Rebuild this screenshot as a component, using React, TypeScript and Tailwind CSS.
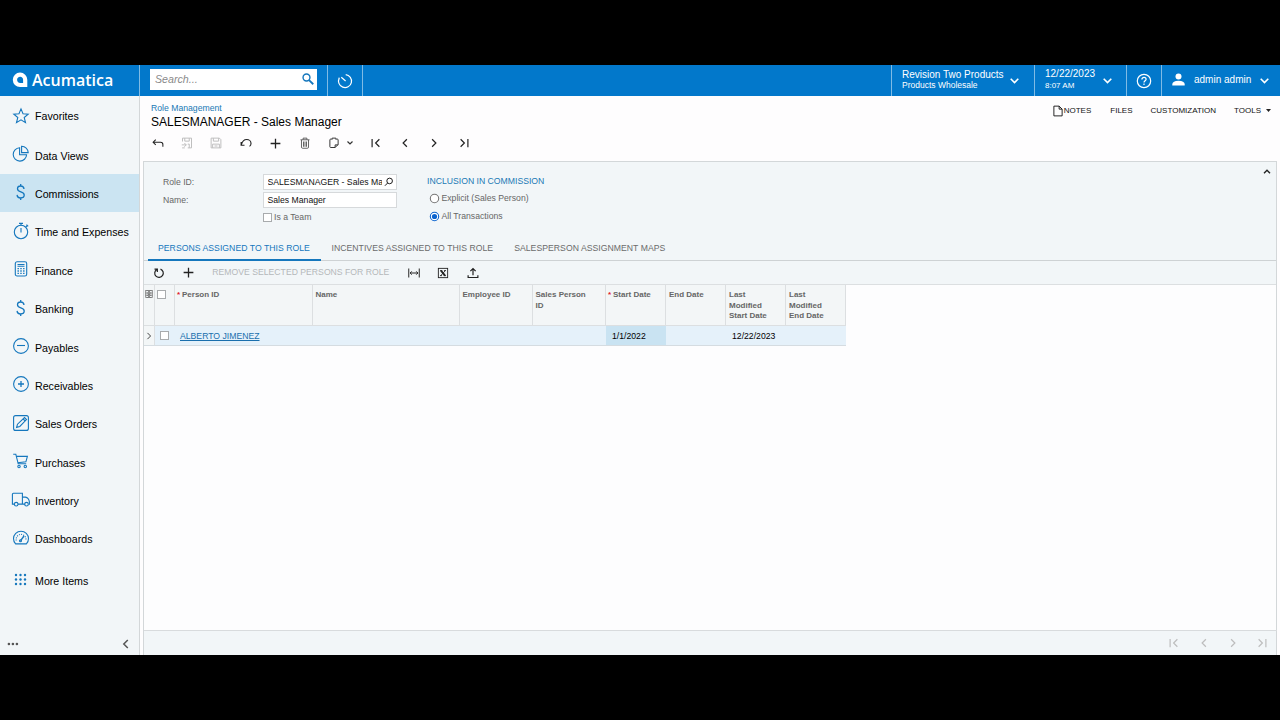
import type { ReactNode } from "react";

type IconProps = {
  children: ReactNode;
  size?: number;
  width?: number;
  className?: string;
};

// all icons are drawn on a 16 unit grid
function Icon({ children, size = 16, width = 1.1, className = "" }: IconProps) {
  return (
    <svg
      width={size}
      height={size}
      viewBox="0 0 16 16"
      fill="none"
      stroke="currentColor"
      strokeWidth={width}
      className={`shrink-0 ${className}`}
    >
      {children}
    </svg>
  );
}

const dollar = (
  <path d="M7.700 0v2M7.700 14v2M11 5C10.800 3 9.500 2 7.700 2 5.700 2 4.500 3.200 4.500 4.800c0 4.200 6.700 2.100 6.700 6.300 0 1.700-1.500 2.900-3.500 2.900s-3.500-1.100-3.600-3.100" strokeWidth="1.3" />
);

const menu = [
  {
    label: "Favorites",
    icon: <path d="M8 .9l2 4.800 5.200.4-4 3.400 1.300 5.100L8 11.800l-4.500 2.800 1.300-5.100-4-3.400L6 5.700z" />,
  },
  {
    label: "Data Views",
    icon: (
      <>
        <path d="M6.600 1.700A6.700 6.700 0 1 0 13.600 8.700H6.600z" />
        <path d="M8.600.3v6.300h6.600A6.500 6.500 0 0 0 8.600.3z" />
      </>
    ),
  },
  { label: "Commissions", icon: dollar, active: true },
  {
    label: "Time and Expenses",
    icon: (
      <>
        <circle cx="8" cy="9" r="6.700" />
        <path d="M8 5v4.500M6 .4h4M8 .4v2M12.900 3.900l1.400-1.400M13.500 1.700l1.700 1.600" />
      </>
    ),
  },
  {
    label: "Finance",
    icon: (
      <>
        <rect x="2.300" y=".8" width="11.400" height="14.200" rx="1.800" />
        <path d="M4.500 3.500h7M4.500 5.300h7" />
        <path d="M4.500 7.600h1.400M7.300 7.600h1.400M10.100 7.600h1.400M4.500 10h1.400M7.300 10h1.400M10.100 10h1.400M4.500 12.400h1.400M7.300 12.400h1.400M10.100 12.400h1.400" strokeWidth="1.400" />
      </>
    ),
  },
  { label: "Banking", icon: dollar },
  {
    label: "Payables",
    icon: (
      <>
        <circle cx="8" cy="8" r="7.400" />
        <path d="M4 7.500h8" />
      </>
    ),
  },
  {
    label: "Receivables",
    icon: (
      <>
        <circle cx="8" cy="8" r="7.400" />
        <path d="M5 8h6M8 5v6" strokeWidth="1.300" />
      </>
    ),
  },
  {
    label: "Sales Orders",
    icon: (
      <>
        <rect x=".6" y=".6" width="14.800" height="14.800" rx="2" />
        <path d="M3.600 12.400l.9-3.200 7-6.600 2 2-6.700 6.900zM10.200 4l1.900 1.900" />
      </>
    ),
  },
  {
    label: "Purchases",
    icon: (
      <>
        <path d="M.2 1.200h2.600l2.400 9.600h8M3.400 3.400h11l-1.500 5.400L4.700 9.700" />
        <circle cx="6" cy="13.500" r="1.200" />
        <circle cx="12.300" cy="13.500" r="1.200" />
      </>
    ),
  },
  {
    label: "Inventory",
    icon: (
      <>
        <path d="M1.300 12.100H-.6V2.300q0-1 1-1h9v10.800H5M9.400 5.100h3q3.400.6 4 4.700v2.300h-.7M12.100 12.100H9.400" />
        <circle cx="3.200" cy="12.200" r="1.800" />
        <circle cx="13.500" cy="12.200" r="1.800" />
      </>
    ),
  },
  {
    label: "Dashboards",
    icon: (
      <>
        <path d="M2.600 13.900A7.500 7.500 0 1 1 13.400 13.900z" />
        <path d="M3.300 10.500A4.900 4.900 0 1 1 12.800 10.500" strokeDasharray="1 1.200" />
        <path d="M7.600 10.700L11 6" strokeWidth="1.400" />
        <circle cx="7.500" cy="10.700" r="1" />
      </>
    ),
  },
];

const columns = [
  { title: "Person ID", width: "w-[137.5px]", required: true },
  { title: "Name", width: "w-[147px]" },
  { title: "Employee ID", width: "w-[73px]" },
  { title: "Sales Person ID", width: "w-[73.5px]" },
  { title: "Start Date", width: "w-[60px]", required: true },
  { title: "End Date", width: "w-[60px]" },
  { title: "Last Modified Start Date", width: "w-[60px]" },
  { title: "Last Modified End Date", width: "w-[60px]" },
];

const first = <path d="M2.800 2.500v11M12.500 3L7.500 8l5 5" />;
const prev = <path d="M10.500 3L5.500 8l5 5" />;
const next = <path d="M5.500 3l5 5-5 5" />;
const last = <path d="M13.200 2.500v11M3.500 3l5 5-5 5" />;
const plus = <path d="M8 2v12M2 8h12" />;

function Chevron({ className = "" }: { className?: string }) {
  return (
    <svg width="9" height="6" viewBox="0 0 9 6" fill="none" stroke="currentColor" strokeWidth="1.600" className={className}>
      <path d="M.7.8l3.800 3.800L8.300.8" />
    </svg>
  );
}

function ToolButton({ children, disabled }: { children: ReactNode; disabled?: boolean }) {
  return (
    <button className={`flex w-[29.4px] shrink-0 justify-center ${disabled ? "text-[#bdbdbd]" : "text-[#222]"}`}>
      {children}
    </button>
  );
}

function CheckBox() {
  return <span className="block size-[9px] shrink-0 border border-[#a8abad] bg-white" />;
}

function Radio({ label, checked }: { label: string; checked?: boolean }) {
  return (
    <label className="flex h-[18px] items-center gap-[1.500px]">
      <svg width="11" height="11" viewBox="0 0 11 11" className="ml-[2px]">
        <circle cx="5.500" cy="5.500" r="4.200" fill="white" stroke={checked ? "#0b63ce" : "#767676"} strokeWidth="1.100" />
        {checked && <circle cx="5.500" cy="5.500" r="2.600" fill="#0b63ce" />}
      </svg>
      {label}
    </label>
  );
}

function Header() {
  return (
    <header className="flex h-[31px] shrink-0 bg-[#0278cb] text-[10px] text-white">
      <div className="flex w-[140px] items-center border-r border-[#7fbbe5] pb-[2px] pl-[12px]">
        <svg width="16" height="16" viewBox="0 0 16 16">
          <path fillRule="evenodd" fill="white" d="M8 .6A7.200 7.200 0 0 1 15.300 7.800V15H8A7.200 7.200 0 0 1 8 .6zM8.200 4.700C6.300 4.700 5.100 6 5.100 7.800S6.300 11 8.200 11h2.900V7.800C11.100 6 10 4.700 8.200 4.700z" />
        </svg>
        <span className="ml-[4px] font-['Open_Sans'] text-[16px] leading-none font-semibold">Acumatica</span>
      </div>
      <div className="flex w-[188px] items-center border-r border-[#7fbbe5] pb-[2px] pl-[10px]">
        <div className="flex h-[21px] w-[167px] items-center justify-between bg-white pr-[3px] pb-[2px] pl-[5px] text-[10.67px] text-[#8a8a8a] italic">
          Search...
          <Icon size={12} width={1.900} className="text-[#1577bd]">
            <circle cx="6" cy="6" r="4.600" />
            <path d="M9.400 9.400l5.600 5.600" strokeWidth="2.400" />
          </Icon>
        </div>
      </div>
      <div className="flex w-[35px] items-center justify-center border-r border-[#7fbbe5]">
        <Icon width={1.200}>
          <path d="M8.700 1.600A6.500 6.500 0 1 1 2.300 5M8.600 8L4.300 4.300M2.200 4.700l-.6 3" />
        </Icon>
      </div>
      <div className="ml-auto flex w-[143px] items-center border-l border-[#7fbbe5] pl-[10px]">
        <div className="mt-[-2px] w-[107px]">
          <p className="leading-[11px]">Revision Two Products</p>
          <p className="text-[8.5px] leading-[10px]">Products Wholesale</p>
        </div>
        <Chevron className="mt-[1px] ml-[1px]" />
      </div>
      <div className="flex w-[92px] items-center border-l border-[#7fbbe5] pl-[10px]">
        <div className="mt-[-3px] w-[58px]">
          <p className="leading-[12px]">12/22/2023</p>
          <p className="text-[8px] leading-[11px]">8:07 AM</p>
        </div>
        <Chevron className="mt-[1px]" />
      </div>
      <div className="flex w-[35px] items-center justify-center border-l border-[#7fbbe5]">
        <svg width="16" height="16" viewBox="0 0 16 16" fill="none" stroke="white" strokeWidth="1.200">
          <circle cx="8" cy="8" r="6.700" />
          <path d="M5.900 6.400C5.900 5 6.800 4.300 8 4.300s2.100.8 2.100 1.900C10.100 7.700 8 7.800 8 9.500M8 10.600v1.300" />
        </svg>
      </div>
      <div className="flex w-[119px] items-center border-l border-[#7fbbe5] pb-[2px] pl-[10px]">
        <svg width="13" height="13" viewBox="0 0 13 13" fill="white">
          <circle cx="6.500" cy="3.500" r="3" />
          <path d="M.3 12.500V11Q.6 8.200 6.500 7.800q5.900.4 6.200 3.200v1.500z" />
        </svg>
        <span className="ml-[9px] w-[66px]">admin admin</span>
        <Chevron className="mt-[2px]" />
      </div>
    </header>
  );
}

function Sidebar() {
  return (
    <aside className="flex w-[140px] shrink-0 flex-col border-r border-[#d3d7d9] bg-[#f2f6f8] pt-[1px] text-[10.67px] text-black">
      {menu.map((item) => (
        <a
          key={item.label}
          className={`flex h-[38.4px] items-center gap-[6.5px] pl-[12.5px] ${item.active ? "bg-[#cbe4f2]" : ""}`}
        >
          <Icon className="mb-[1px] overflow-visible text-[#1577bd]">{item.icon}</Icon>
          <span className={item.label === "Favorites" ? "" : "pt-[2px]"}>{item.label}</span>
        </a>
      ))}
      <a className="mt-[4px] flex h-[38px] items-center gap-[6.5px] pl-[12.5px]">
        <svg width="16" height="16" viewBox="0 0 16 16" fill="#1577bd" className="mb-[2px]">
          {[3, 7.5, 12].map((y) => [3, 7.5, 12].map((x) => <circle key={`${x}-${y}`} cx={x} cy={y} r="1.200" />))}
        </svg>
        <span className="pt-[1px]">More Items</span>
      </a>
      <div className="mt-auto flex h-[22px] items-center justify-between pr-[5px] pl-[7px] text-[#555]">
        <svg width="12" height="4" viewBox="0 0 12 4" fill="currentColor">
          <circle cx="1.900" cy="2" r="1.300" />
          <circle cx="5.900" cy="2" r="1.300" />
          <circle cx="9.900" cy="2" r="1.300" />
        </svg>
        <Icon width={1.500}>
          <path d="M9.800 4L5.800 8l4 4" />
        </Icon>
      </div>
    </aside>
  );
}

function Toolbar() {
  return (
    <div className="flex h-[30px] items-center">
      <ToolButton>
        <Icon size={12} width={1.400}>
          <path d="M5 3.500L1.500 7 5 10.500M1.500 7h10q3 0 3 3v3" />
        </Icon>
      </ToolButton>
      <ToolButton disabled>
        <Icon size={12} width={1.300}>
          <path d="M2 6V1.500h12v13H9M5 1.500v4h6v-4M1 10.500h6M4.500 8L7 10.500 4.500 13M1.500 14.500H5M9 9.500h2v5" />
        </Icon>
      </ToolButton>
      <ToolButton disabled>
        <Icon size={12} width={1.300}>
          <path d="M1.500 1.500h11l2 2v11h-13zM4.500 1.500v4h7v-4M3.500 14.500v-5h9v5M6 12h4" />
        </Icon>
      </ToolButton>
      <ToolButton>
        <Icon size={12} width={1.500}>
          <path d="M1.500 6.500v4.500H6M1.800 10.500C3 5.500 6 3.300 9 3.300c3.200 0 5.700 2.400 5.700 5.200 0 1.700-.8 3-2 4" />
        </Icon>
      </ToolButton>
      <ToolButton>
        <Icon size={13} width={1.600}>{plus}</Icon>
      </ToolButton>
      <ToolButton>
        <Icon size={12} width={1.200} className="text-[#555]">
          <path d="M2 3.700h12M5.500 3.500V1.500h5v2M3.300 4v9.500q0 1.500 1.500 1.500h6.400q1.500 0 1.500-1.500V4M6 6v7M8 6v7M10 6v7" />
        </Icon>
      </ToolButton>
      <button className="flex w-[41.6px] items-center gap-[7px] pl-[8.7px] text-[#333]">
        <Icon size={12} width={1.300}>
          <path d="M5 2.800H3.500q-1 0-1 1V13q0 1 1 1H9.500l4-4V3.800q0-1-1-1H11M5.500 3.500V1.500h5v2M9.500 14v-3.500h4" />
        </Icon>
        <svg width="6" height="4" viewBox="0 0 6 4" fill="none" stroke="currentColor" strokeWidth="1.200">
          <path d="M.5.5L3 3 5.500.5" />
        </svg>
      </button>
      <ToolButton><Icon size={12} width={1.600}>{first}</Icon></ToolButton>
      <ToolButton><Icon size={12} width={1.600}>{prev}</Icon></ToolButton>
      <ToolButton><Icon size={12} width={1.600}>{next}</Icon></ToolButton>
      <ToolButton><Icon size={12} width={1.600}>{last}</Icon></ToolButton>
    </div>
  );
}

function RoleForm() {
  return (
    <section className="flex h-[74px] items-start pt-[11px] pl-[19px] text-[#666]">
      <div className="w-[100px]">
        <p className="h-[18px] leading-[18px]">Role ID:</p>
        <p className="h-[18px] leading-[18px]">Name:</p>
      </div>
      <div className="w-[164px]">
        <div className="mt-px flex h-[16px] w-[133.5px] items-center border border-[#d6d9db] bg-white pr-[2px] pl-[3.5px] text-[#111]">
          <span className="w-[114px] overflow-hidden whitespace-nowrap">SALESMANAGER - Sales Manager</span>
          <Icon size={10} width={1.500} className="ml-auto">
            <circle cx="9" cy="6.300" r="4.500" />
            <path d="M5.800 9.600L1.500 14" />
          </Icon>
        </div>
        <div className="mt-[2px] flex h-[16px] w-[133.5px] items-center border border-[#d6d9db] bg-white pl-[3.5px] text-[#111]">
          Sales Manager
        </div>
        <label className="flex h-[19px] items-center gap-[2px]">
          <CheckBox />
          Is a Team
        </label>
      </div>
      <div>
        <p className="h-[16px] leading-[17px] text-[#1a79b5]">INCLUSION IN COMMISSION</p>
        <Radio label="Explicit (Sales Person)" />
        <Radio label="All Transactions" checked />
      </div>
      <svg width="8" height="5" viewBox="0 0 8 5" fill="none" stroke="#222" strokeWidth="1.400" className="mt-[-4px] mr-[5px] ml-auto">
        <path d="M1 4.300l3-3 3 3" />
      </svg>
    </section>
  );
}

function Tabs() {
  return (
    <nav className="flex h-[25px] border-b border-[#ced2d4] pl-[4px] leading-[24px] tracking-[0.03px] text-[#6b6b6b]">
      <a className="-mb-px w-[173px] border-b-2 border-[#1577bd] pl-[10px] text-[#1577bd]">PERSONS ASSIGNED TO THIS ROLE</a>
      <a className="pl-[10.5px]">INCENTIVES ASSIGNED TO THIS ROLE</a>
      <a className="pl-[21px]">SALESPERSON ASSIGNMENT MAPS</a>
    </nav>
  );
}

function GridToolbar() {
  return (
    <div className="flex h-[24px] items-center border-b border-[#dcdfe1]">
      <ToolButton>
        <Icon size={12} width={1.600}>
          <path d="M10 2.800A5.700 5.700 0 1 1 5 3.300M2 2.800h3.800v3.700" />
        </Icon>
      </ToolButton>
      <ToolButton><Icon size={13} width={1.600}>{plus}</Icon></ToolButton>
      <span className="mr-[9px] ml-[9.5px] w-[178px] whitespace-nowrap text-[#b5b8ba]">REMOVE SELECTED PERSONS FOR ROLE</span>
      <ToolButton>
        <Icon size={12} width={1.300}>
          <path d="M1 2v12M15 2v12M3 8h10M5 5.800L2.800 8 5 10.200M11 5.800L13.200 8 11 10.200" />
        </Icon>
      </ToolButton>
      <ToolButton>
        <Icon size={12} width={1.200}>
          <rect x="1.800" y="1.800" width="12.400" height="12.400" />
          <path d="M5.300 4.800l5.400 6.700" strokeWidth="2.400" />
          <path d="M11 5l-6 6.500M4 4.800h3M9.300 4.800H12M4 11.500h2.700M9 11.500h3" />
        </Icon>
      </ToolButton>
      <ToolButton>
        <Icon size={12} width={1.600}>
          <path d="M8 11V2.500M4.500 5.500L8 2l3.500 3.500M1.500 11v3h13v-3" />
        </Icon>
      </ToolButton>
    </div>
  );
}

function Grid() {
  return (
    <div className="flex-1 bg-[#fdfdfe]">
      <div className="w-[702px]">
        <div className="flex h-[41px] border-b border-[#dcdfe1] bg-[#f3f6f7] text-[8px] leading-[10.7px] font-bold text-[#666]">
          <div className="w-[11px] shrink-0 border-r border-[#dcdfe1] pt-[5px] pl-px">
            <Icon size={8} width={1.500} className="text-[#666]">
              <rect x="1.500" y="1" width="13" height="14" />
              <path d="M1.500 6h13M1.500 10.500h13M5 1l6 5-6 4.500 6 4.500M11 1L5 6l6 4.500L5 15" />
            </Icon>
          </div>
          <div className="w-[20px] shrink-0 border-r border-[#dcdfe1] pt-[5px] pl-[2px]">
            <CheckBox />
          </div>
          {columns.map((col) => (
            <div key={col.title} className={`${col.width} shrink-0 border-r border-[#dcdfe1] pt-[5px] ${col.required ? "flex pl-[2px]" : "pr-[10px] pl-[3px]"}`}>
              {col.required && <span className="w-[5px] text-[#e0202a]">*</span>}
              <span>{col.title}</span>
            </div>
          ))}
        </div>
        <div className="flex h-[20px] items-center border-b border-[#d5dce1] bg-[#e5f1fa] text-black">
          <div className="flex h-full w-[11px] items-center border-r border-[#dcdfe1] bg-[#f3f6f7]">
            <Icon size={10} width={1.600} className="text-[#444]">{next}</Icon>
          </div>
          <div className="w-[20px] pl-[5px]">
            <CheckBox />
          </div>
          <a className="w-[431px] pt-[1px] pl-[5px] text-[#1a6fad] underline">ALBERTO JIMENEZ</a>
          <div className="flex h-full w-[60px] items-center bg-[#c9e3f2] pt-[1px] pl-[6px]">1/1/2022</div>
          <div className="w-[60px]" />
          <div className="w-[60px] pt-[1px] pl-[6px]">12/22/2023</div>
        </div>
      </div>
    </div>
  );
}

export default function App() {
  return (
    <div className="h-[720px] w-[1280px] overflow-hidden bg-black py-[65px] font-['Liberation_Sans',sans-serif]">
      <div className="flex h-[590px] flex-col bg-[#fefdfe]">
        <Header />
        <div className="flex min-h-0 flex-1">
          <Sidebar />
          <main className="flex min-w-0 flex-1 flex-col pr-[3px] pl-[3px] text-[8.67px]">
            <div className="flex h-[32px] justify-between pt-[6px] pl-[8px]">
              <div className="pt-px">
                <p className="leading-[11px] text-[#1a79b5]">Role Management</p>
                <h1 className="text-[12px] leading-[17px] text-black">SALESMANAGER - Sales Manager</h1>
              </div>
              <div className="flex h-[17px] items-center text-[8px] text-[#111]">
                <Icon size={12} width={1.200}>
                  <path d="M2.500 1.500h7l4 4v9h-11zM9.500 1.500v4h4" />
                </Icon>
                <span>NOTES</span>
                <span className="ml-[19px]">FILES</span>
                <span className="ml-[18px]">CUSTOMIZATION</span>
                <span className="ml-[18px]">TOOLS</span>
                <svg width="5" height="3" viewBox="0 0 5 3" className="mr-[6px] ml-[5px]">
                  <path d="M0 0h5L2.500 3z" fill="#222" />
                </svg>
              </div>
            </div>
            <Toolbar />
            <div className="mt-[3px] flex min-h-0 flex-1 flex-col border border-b-0 border-[#d3d7d9] bg-[#f2f6f8]">
              <RoleForm />
              <Tabs />
              <GridToolbar />
              <Grid />
              <div className="-mr-px flex h-[25px] shrink-0 items-center justify-end border-t border-[#d8dbdd]">
                <ToolButton disabled><Icon size={12} width={1.600}>{first}</Icon></ToolButton>
                <ToolButton disabled><Icon size={12} width={1.600}>{prev}</Icon></ToolButton>
                <ToolButton disabled><Icon size={12} width={1.600}>{next}</Icon></ToolButton>
                <ToolButton disabled><Icon size={12} width={1.600}>{last}</Icon></ToolButton>
              </div>
            </div>
          </main>
        </div>
      </div>
    </div>
  );
}
